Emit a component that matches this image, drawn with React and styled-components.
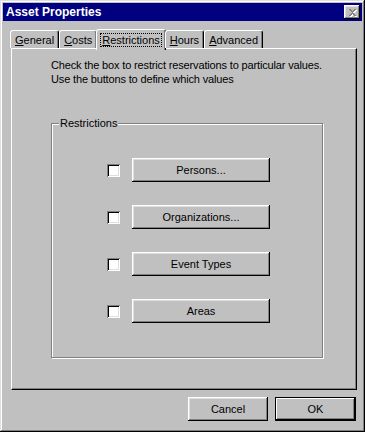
import React from "react";
import styled, { createGlobalStyle, css } from "styled-components";

const Global = createGlobalStyle`
  html, body { margin: 0; padding: 0; background: #c0c0c0; }
  body { font-family: "Liberation Sans", Arial, sans-serif; font-size: 11px; color: #000; }
`;

const raised = css`
  box-shadow: inset -1px -1px #000, inset 1px 1px #fff, inset -2px -2px #808080, inset 2px 2px #dfdfdf;
`;

const Window = styled.div`
  width: 365px;
  height: 432px;
  box-sizing: border-box;
  background: #c0c0c0;
  padding: 3px;
  display: flex;
  flex-direction: column;
  box-shadow: inset -1px -1px #000, inset 1px 1px #dfdfdf, inset -2px -2px #808080, inset 2px 2px #fff;
`;

const TitleBar = styled.div`
  height: 18px;
  background: #000080;
  color: #fff;
  display: flex;
  align-items: center;
  justify-content: space-between;
  padding: 0 2px 0 3px;
  font-weight: bold;
  font-size: 12px;
`;

const CloseBtn = styled.div`
  width: 16px;
  height: 14px;
  background: #c0c0c0;
  ${raised};
  display: flex;
  align-items: center;
  justify-content: center;
`;

const TabRow = styled.div`
  display: flex;
  align-items: flex-end;
  margin: 6px 0 0 7px;
  height: 21px;
  position: relative;
  z-index: 1;
`;

const Tab = styled.div`
  box-sizing: border-box;
  height: ${p => (p.$active ? 21 : 18)}px;
  padding: 0 ${p => (p.$active ? 4 : 3)}px;
  margin: 0 ${p => (p.$active ? -1 : 0)}px ${p => (p.$active ? -2 : 0)}px;
  background: #c0c0c0;
  border-top: 1px solid #fff;
  border-left: 1px solid #fff;
  border-right: 1px solid #000;
  border-radius: 3px 3px 0 0;
  box-shadow: inset -1px 0 #808080;
  display: flex;
  align-items: center;
  white-space: nowrap;
`;

const TabLabel = styled.span`
  padding: 0 1px;
  outline: ${p => (p.$focus ? "1px dotted #000" : "none")};
`;

const U = styled.span`
  text-decoration: underline;
`;

const Panel = styled.div`
  margin: 0 5px 0 8px;
  height: 342px;
  box-sizing: border-box;
  border-top: 1px solid #fff;
  border-left: 1px solid #fff;
  border-right: 1px solid #000;
  border-bottom: 1px solid #000;
  box-shadow: inset -1px -1px #808080;
  padding: 9px 33px 31px 39px;
  display: flex;
  flex-direction: column;
`;

const Intro = styled.p`
  margin: 0;
  line-height: 14px;
  white-space: nowrap;
  letter-spacing: -0.15px;
`;

const Group = styled.div`
  position: relative;
  margin-top: 37px;
  flex: 1;
  box-sizing: border-box;
  border: 1px solid #808080;
  box-shadow: 1px 1px #fff, inset 1px 1px #fff;
  padding: 34px 0 0 55px;
  display: flex;
  flex-direction: column;
  gap: 23px;
`;

const Legend = styled.span`
  position: absolute;
  top: -8px;
  left: 7px;
  padding: 0 1px;
  background: #c0c0c0;
  line-height: 14px;
`;

const Row = styled.div`
  display: flex;
  align-items: center;
  gap: 12px;
`;

const Check = styled.span`
  width: 13px;
  height: 13px;
  box-sizing: border-box;
  background: #fff;
  box-shadow: inset 1px 1px #808080, inset -1px -1px #fff, inset 2px 2px #000, inset -2px -2px #dfdfdf;
`;

const Button = styled.div`
  box-sizing: border-box;
  width: ${p => p.$w || 138}px;
  height: 24px;
  background: #c0c0c0;
  display: flex;
  align-items: center;
  justify-content: center;
  ${p =>
    p.$default
      ? css`
          box-shadow: inset 0 0 0 1px #000, inset -2px -2px #000, inset 2px 2px #fff, inset -3px -3px #808080;
        `
      : raised};
`;

const Footer = styled.div`
  display: flex;
  justify-content: flex-end;
  gap: 7px;
  margin: 7px 6px 0 0;
`;

export default function App() {
  const rows = ["Persons...", "Organizations...", "Event Types", "Areas"];
  return (
    <>
      <Global />
      <Window>
        <TitleBar>
          <span>Asset Properties</span>
          <CloseBtn>
            <svg width="10" height="9" viewBox="0 0 10 9">
              <path d="M2 1h2v1h1v1h1V2h1V1h2v1H8v1H7v1H6v1h1v1h1v1h1v1H7V7H6V6H5v1H4v1H2V7h1V6h1V5h1V4H4V3H3V2H2z" fill="#fff" transform="translate(1 1)" />
              <path d="M2 1h2v1h1v1h1V2h1V1h2v1H8v1H7v1H6v1h1v1h1v1h1v1H7V7H6V6H5v1H4v1H2V7h1V6h1V5h1V4H4V3H3V2H2z" fill="#808080" />
            </svg>
          </CloseBtn>
        </TitleBar>
        <TabRow>
          <Tab><TabLabel><U>G</U>eneral</TabLabel></Tab>
          <Tab><TabLabel><U>C</U>osts</TabLabel></Tab>
          <Tab $active><TabLabel $focus><U>R</U>estrictions</TabLabel></Tab>
          <Tab><TabLabel><U>H</U>ours</TabLabel></Tab>
          <Tab><TabLabel><U>A</U>dvanced</TabLabel></Tab>
        </TabRow>
        <Panel>
          <Intro>
            Check the box to restrict reservations to particular values.
            <br />
            Use the buttons to define which values
          </Intro>
          <Group>
            <Legend>Restrictions</Legend>
            {rows.map(r => (
              <Row key={r}>
                <Check />
                <Button>{r}</Button>
              </Row>
            ))}
          </Group>
        </Panel>
        <Footer>
          <Button $w={80}>Cancel</Button>
          <Button $w={81} $default>OK</Button>
        </Footer>
      </Window>
    </>
  );
}
